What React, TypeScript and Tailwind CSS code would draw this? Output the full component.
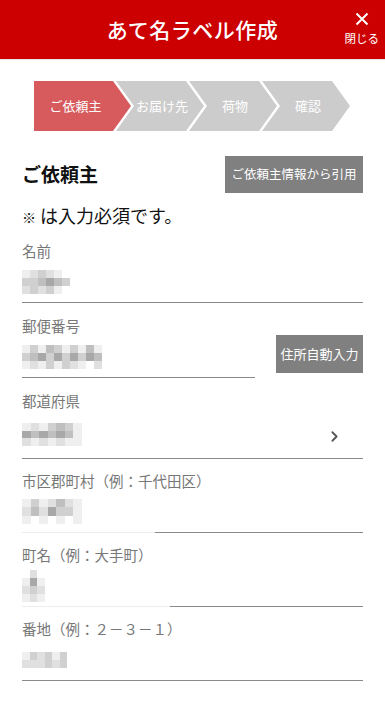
import { ChevronRight } from "lucide-react";

// ─── Constants ──────────────────────────────────────

const FONT = { fontFamily: '"Noto Sans CJK JP", "Noto Sans", sans-serif' };

const SHADES: Record<string, string> = {
  "0": "bg-white",
  "1": "bg-[#efefef]",
  "2": "bg-[#e0e0e0]",
  "3": "bg-[#d0d0d0]",
  "4": "bg-[#bfbfbf]",
  "5": "bg-[#a8a8a8]",
  "6": "bg-[#909090]",
};

const STEPS = ["お届け先", "荷物", "確認"];

// ─── Pieces ─────────────────────────────────────────

// redacted value: a small grid of grey squares
function Blur({ rows, cell = "w-[8px] h-[8px]" }: { rows: string[]; cell?: string }) {
  return (
    <div className="flex flex-col">
      {rows.map((row, i) => (
        <div key={i} className="flex">
          {row.split("").map((c, j) => (
            <div key={j} className={`${cell} ${SHADES[c]}`} />
          ))}
        </div>
      ))}
    </div>
  );
}

function Field({
  label,
  rows,
  cell,
  tall,
  tight,
  fade,
  right,
}: {
  label: string;
  rows: string[];
  cell?: string;
  tall?: boolean;
  tight?: boolean;
  fade?: string;
  right?: React.ReactNode;
}) {
  return (
    <div className={tight ? "pt-[12px]" : "pt-[13px]"}>
      <div className="text-[14.5px] leading-[20px] text-[#777]">{label}</div>
      <div className={`flex items-center justify-between ${tall ? "h-[47px]" : "h-[41px]"}`}>
        <Blur rows={rows} cell={cell} />
        {right}
      </div>
      <div className="flex h-px">
        {fade && <div className={`${fade} bg-[#ececec]`} />}
        <div className="flex-1 bg-[#8a8a8a]" />
      </div>
    </div>
  );
}

// ─── Component ──────────────────────────────────────

export default function App() {
  return (
    <div className="w-[385px] min-h-[701px] bg-white" style={FONT}>
      {/* Header */}
      <header className="relative flex h-[60px] items-center justify-center bg-[#cc0000] border-b border-[#e6e6e6]">
        <h1 className="text-[21px] font-medium text-white tracking-[0.5px]">あて名ラベル作成</h1>
        <button className="absolute right-[6px] top-[12px] flex flex-col items-center text-white">
          <svg width="14" height="14" viewBox="0 0 14 14" className="mb-[4px]">
            <path d="M1.5 1.5 L12.5 12.5 M12.5 1.5 L1.5 12.5" stroke="white" strokeWidth="2" />
          </svg>
          <span className="text-[11.5px] leading-[16px]">閉じる</span>
        </button>
      </header>

      {/* Stepper */}
      <div className="mt-[21px] flex h-[50px] pl-[34px]">
        <div className="flex w-[97px] items-center justify-center pr-[14px] bg-[#d75a5d] text-[13px] text-white [clip-path:polygon(0_0,79px_0,100%_50%,79px_100%,0_100%)]">
          ご依頼主
        </div>
        {STEPS.map((s) => (
          <div
            key={s}
            className="-ml-[15px] flex w-[88px] items-center justify-center pl-[4px] bg-[#cccccc] text-[13px] text-white [clip-path:polygon(0_0,70px_0,100%_50%,70px_100%,0_100%,18px_50%)]"
          >
            {s}
          </div>
        ))}
      </div>

      <div className="px-[22px]">
        {/* Section heading */}
        <div className="mt-[25px] flex items-center justify-between">
          <h2 className="text-[19px] font-bold text-[#111]">ご依頼主</h2>
          <button className="flex h-[37px] w-[138px] items-center justify-center bg-[#808080] text-[12.5px] text-white">
            ご依頼主情報から引用
          </button>
        </div>
        <p className="mt-[10px] text-[18px] leading-[24px] text-[#111]">
          <span className="text-[14px]">※</span> は入力必須です。
        </p>

        <div className="mt-[-1px]">
          <Field label="名前" rows={["123210", "334543", "232310"]} />

          {/* Postal code with auto-fill button */}
          <div className="flex items-end gap-[21px]">
            <div className="flex-1">
              <Field label="郵便番号" rows={["1314313141", "3453535354", "1213132102"]} />
            </div>
            <button className="mb-[5px] flex h-[38px] w-[87px] items-center justify-center bg-[#808080] text-[13px] text-white">
              住所自動入力
            </button>
          </div>

          <Field
            label="都道府県"
            tall
            rows={["1213431", "5454541", "2121211"]}
            cell="w-[8.5px] h-[7.5px]"
            right={<ChevronRight className="mr-[20px] mt-[4px] text-[#555]" size={17} strokeWidth={2.5} />}
          />
          <Field
            label="市区郡町村（例：千代田区）"
            tight
            rows={["1312421", "2425331", "1010101"]}
            cell="w-[8.5px] h-[8.5px]"
            fade="w-[133px]"
          />
          <Field
            label="町名（例：大手町）"
            tight
            rows={["020", "151", "232", "121"]}
            cell="w-[7.5px] h-[8px]"
            fade="w-[148px]"
          />
          <Field label="番地（例：２－３－１）" tight rows={["132313", "222323"]} cell="w-[7.5px] h-[8px]" />
        </div>
      </div>
    </div>
  );
}
